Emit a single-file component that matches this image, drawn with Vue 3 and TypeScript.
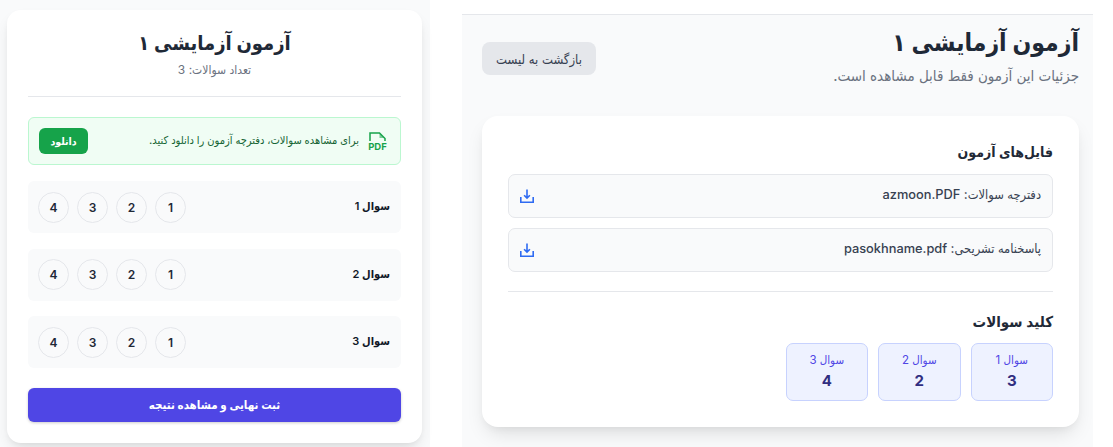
<script setup lang="ts">
const questions = [1, 2, 3]
const options = [1, 2, 3, 4]
const files = ['دفترچه سوالات: azmoon.PDF', 'پاسخنامه تشریحی: pasokhname.pdf']
const keys = [
  { label: 'سوال 1', value: 3 },
  { label: 'سوال 2', value: 2 },
  { label: 'سوال 3', value: 4 },
]
</script>

<template>
  <div class="page">
    <section class="left">
      <div class="card exam" dir="rtl">
        <header class="exam-head">
          <h1>آزمون آزمایشی ۱</h1>
          <p>تعداد سوالات: 3</p>
        </header>
        <div class="notice">
          <div class="notice-main">
            <div class="pdf">
              <svg width="17" height="9" viewBox="0 0 17 9" fill="none">
                <path d="M1 9V1h9.5L16 6.5V9" stroke="#16a34a" stroke-width="1.5" />
                <path d="M10.5 1.5 15 6h-4.5z" fill="#16a34a" opacity=".55" />
              </svg>
              <span dir="ltr">PDF</span>
            </div>
            <span class="notice-text">برای مشاهده سوالات، دفترچه آزمون را دانلود کنید.</span>
          </div>
          <button class="dl">دانلود</button>
        </div>
        <div class="rows">
          <div v-for="q in questions" :key="q" class="row">
            <span class="q-label">سوال {{ q }}</span>
            <div class="opts">
              <span v-for="o in options" :key="o" class="opt">{{ o }}</span>
            </div>
          </div>
        </div>
        <button class="submit">ثبت نهایی و مشاهده نتیجه</button>
      </div>
    </section>

    <section class="right" dir="rtl">
      <div class="right-head">
        <div>
          <h1>آزمون آزمایشی ۱</h1>
          <p>جزئیات این آزمون فقط قابل مشاهده است.</p>
        </div>
        <button class="back">بازگشت به لیست</button>
      </div>
      <div class="card detail">
        <h2>فایل‌های آزمون</h2>
        <div class="files">
          <div v-for="f in files" :key="f" class="file">
            <span>{{ f }}</span>
            <svg width="14" height="14" viewBox="0 0 14 14" fill="none" stroke="#2f6bf2" stroke-width="1.6">
              <path d="M.8 8v5.2h12.4V8M7 .5v8.5M4.1 6.2 7 9.1l2.9-2.9" />
            </svg>
          </div>
        </div>
        <hr />
        <h2 class="key-title">کلید سوالات</h2>
        <div class="keys">
          <div v-for="k in keys" :key="k.label" class="key">
            <span class="key-label">{{ k.label }}</span>
            <strong>{{ k.value }}</strong>
          </div>
        </div>
      </div>
    </section>
  </div>
</template>

<style>
html, body { margin: 0; background: #fff; }
</style>

<style scoped>
.page {
  width: 1113px;
  height: 447px;
  overflow: hidden;
  display: flex;
  align-items: flex-start;
  background: #fff;
  font-family: Inter, "DejaVu Sans Condensed", "DejaVu Sans", sans-serif;
  color: #111827;
}
h1, h2, p { margin: 0; }
button { font-family: inherit; border: 0; padding: 0; }
.left {
  width: 430px;
  height: 447px;
  flex: none;
  box-sizing: border-box;
  padding: 10px 8px 0 7px;
  background: #f9fafb;
}
.card {
  background: #fff;
  border-radius: 14px;
  box-shadow: 0 8px 16px -4px rgba(0, 0, 0, .12), 0 3px 6px -2px rgba(0, 0, 0, .06);
}
.exam {
  height: 433px;
  box-sizing: border-box;
  padding: 18px 21px 0;
}
.exam-head {
  height: 69px;
  box-sizing: border-box;
  text-align: center;
  border-bottom: 1px solid #e5e7eb;
}
.exam-head h1 {
  font-size: 20px;
  line-height: 30px;
  font-weight: 700;
  color: #1f2937;
}
.exam-head p {
  font-size: 12px;
  line-height: 20px;
  margin-top: 2px;
  color: #6b7280;
}
.notice {
  margin-top: 20px;
  height: 48px;
  box-sizing: border-box;
  padding: 0 14px 0 10px;
  display: flex;
  align-items: center;
  justify-content: space-between;
  background: #f0fdf4;
  border: 1px solid #bbf7d0;
  border-radius: 6px;
  color: #166534;
}
.notice-main {
  display: flex;
  align-items: center;
  gap: 10px;
}
.notice-text {
  font-size: 11px;
  font-weight: 500;
  line-height: 16px;
  margin-top: -3px;
}
.pdf {
  width: 17px;
  display: flex;
  flex-direction: column;
  align-items: center;
  gap: 1px;
  font-size: 9.5px;
  line-height: 9px;
  font-weight: 700;
  color: #16a34a;
}
.pdf svg { display: block; }
.dl {
  width: 49px;
  height: 26px;
  border-radius: 6px;
  background: #16a34a;
  color: #fff;
  font-size: 10.5px;
  font-weight: 600;
}
.rows {
  margin-top: 16px;
  display: flex;
  flex-direction: column;
  gap: 15.5px;
}
.row {
  height: 52px;
  box-sizing: border-box;
  padding: 0 11px 0 10px;
  display: flex;
  align-items: center;
  justify-content: space-between;
  background: #f9fafb;
  border-radius: 6px;
}
.q-label {
  font-size: 11px;
  font-weight: 600;
  margin-top: -2px;
}
.opts {
  display: flex;
  gap: 8px;
}
.opt {
  width: 31px;
  height: 31px;
  box-sizing: border-box;
  border: 1.5px solid #e5e7eb;
  border-radius: 50%;
  display: flex;
  align-items: center;
  justify-content: center;
  font-size: 12px;
  font-weight: 600;
  color: #1f2937;
}
.submit {
  display: block;
  width: 100%;
  height: 34px;
  margin-top: 20px;
  border-radius: 6px;
  background: #4f46e5;
  color: #fff;
  font-size: 11.5px;
  font-weight: 700;
  box-shadow: 0 1px 3px rgba(0, 0, 0, .2);
}
.right {
  width: 631px;
  height: 433px;
  flex: none;
  margin: 14px 0 0 32px;
  box-sizing: border-box;
  padding: 0 14px 0 20px;
  background: #f9fafb;
  border-top: 1px solid #e5e7eb;
}
.right-head {
  height: 101px;
  display: flex;
  justify-content: space-between;
  align-items: flex-start;
}
.right-head h1 {
  margin-top: 9px;
  font-size: 24.5px;
  line-height: 36px;
  font-weight: 700;
  color: #1f2937;
}
.right-head p {
  margin-top: 6px;
  font-size: 15px;
  line-height: 20px;
  color: #6b7280;
}
.back {
  margin-top: 27px;
  width: 114px;
  height: 33px;
  border-radius: 8px;
  background: #e5e7eb;
  color: #374151;
  font-size: 13px;
}
.detail {
  height: 311px;
  box-sizing: border-box;
  padding: 24px 26px 0;
  border-radius: 16px;
  box-shadow: 0 10px 20px -5px rgba(0, 0, 0, .13), 0 4px 8px -3px rgba(0, 0, 0, .05);
}
h2 {
  font-size: 14px;
  line-height: 24px;
  font-weight: 600;
  color: #1f2937;
}
.files {
  margin-top: 10px;
  display: flex;
  flex-direction: column;
  gap: 10px;
}
.file {
  height: 44px;
  box-sizing: border-box;
  padding: 0 11px;
  display: flex;
  align-items: center;
  justify-content: space-between;
  background: #f9fafb;
  border: 1px solid #e5e7eb;
  border-radius: 7px;
  font-size: 12.8px;
  font-weight: 500;
  color: #374151;
}
.file span { margin-top: -4px; }
hr {
  margin: 19px 0 0;
  border: 0;
  border-top: 1px solid #e5e7eb;
}
.key-title {
  margin-top: 18px;
  font-size: 15px;
}
.keys {
  margin-top: 9px;
  display: flex;
  gap: 10px;
}
.key {
  width: 82.5px;
  height: 58px;
  box-sizing: border-box;
  display: flex;
  flex-direction: column;
  align-items: center;
  justify-content: center;
  gap: 2px;
  background: #eef2ff;
  border: 1px solid #c7d2fe;
  border-radius: 7px;
}
.key-label {
  font-size: 11.5px;
  line-height: 16px;
  color: #4f46e5;
}
.key strong {
  font-size: 15px;
  line-height: 22px;
  font-weight: 700;
  color: #312e81;
}
</style>
